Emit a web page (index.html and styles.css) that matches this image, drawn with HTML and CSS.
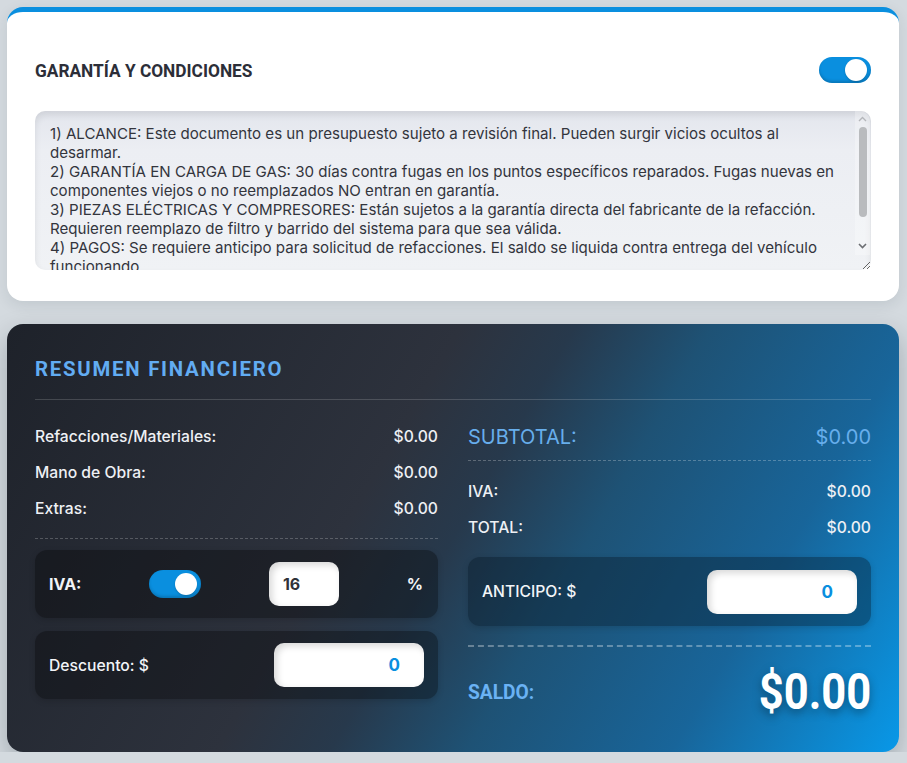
FILE: index.html
```html
<!DOCTYPE html>
<html lang="es">
<head>
<meta charset="utf-8">
<title>Presupuesto</title>
<link rel="stylesheet" href="styles.css">
</head>
<body>
<div class="page">
  <section class="card terms">
    <div class="terms-head">
      <h2 class="terms-title"><span class="narrow">GARANTÍA Y CONDICIONES</span></h2>
      <span class="switch switch-lg"><span class="knob"></span></span>
    </div>
    <div class="terms-box">
      <textarea class="terms-text">1) ALCANCE: Este documento es un presupuesto sujeto a revisión final. Pueden surgir vicios ocultos al desarmar.
2) GARANTÍA EN CARGA DE GAS: 30 días contra fugas en los puntos específicos reparados. Fugas nuevas en componentes viejos o no reemplazados NO entran en garantía.
3) PIEZAS ELÉCTRICAS Y COMPRESORES: Están sujetos a la garantía directa del fabricante de la refacción. Requieren reemplazo de filtro y barrido del sistema para que sea válida.
4) PAGOS: Se requiere anticipo para solicitud de refacciones. El saldo se liquida contra entrega del vehículo funcionando.</textarea>
      <div class="scrollbar" aria-hidden="true">
        <svg class="sb-arrow" width="9" height="6" viewBox="0 0 9 6"><path d="M1 5 L4.5 1.5 L8 5" fill="none" stroke="#b4b6ba" stroke-width="1.4"/></svg>
        <span class="sb-thumb"></span>
        <svg class="sb-arrow sb-down" width="9" height="6" viewBox="0 0 9 6"><path d="M1 1 L4.5 4.5 L8 1" fill="none" stroke="#6c6e73" stroke-width="1.6"/></svg>
      </div>
    </div>
  </section>

  <section class="card summary">
    <h2 class="summary-title"><span class="narrow">RESUMEN FINANCIERO</span></h2>
    <div class="summary-grid">
      <div class="col">
        <div class="lines lines-left">
          <div class="row"><span>Refacciones/Materiales:</span><span>$0.00</span></div>
          <div class="row"><span>Mano de Obra:</span><span>$0.00</span></div>
          <div class="row"><span>Extras:</span><span>$0.00</span></div>
        </div>
        <div class="box box-iva">
          <span class="box-label strong">IVA:</span>
          <span class="switch"><span class="knob"></span></span>
          <input class="field field-pct" type="text" value="16">
          <span class="box-label strong">%</span>
        </div>
        <div class="box">
          <span class="box-label">Descuento: $</span>
          <input class="field field-money" type="text" value="0">
        </div>
      </div>
      <div class="col">
        <div class="row subtotal"><span>SUBTOTAL:</span><span>$0.00</span></div>
        <div class="row row-first"><span>IVA:</span><span>$0.00</span></div>
        <div class="row"><span>TOTAL:</span><span>$0.00</span></div>
        <div class="box box-anticipo">
          <span class="box-label">ANTICIPO: $</span>
          <input class="field field-money" type="text" value="0">
        </div>
        <div class="saldo">
          <span class="saldo-label"><span class="narrow">SALDO:</span></span>
          <span class="saldo-value"><span class="narrow narrow-right">$0.00</span></span>
        </div>
      </div>
    </div>
  </section>
</div>
</body>
</html>
```

FILE: styles.css
```css
* { box-sizing: border-box; }

html, body {
  margin: 0;
  padding: 0;
  background: #d4dadf;
  font-family: Inter, "Noto Sans", "Liberation Sans", sans-serif;
}

.page {
  padding: 7px 8px 0 7px;
  display: flex;
  flex-direction: column;
  gap: 23px;
}

.card {
  border-radius: 16px;
}

.narrow {
  display: inline-block;
  white-space: nowrap;
  transform-origin: left center;
}

.narrow-right { transform-origin: right center; }

.terms {
  background: #ffffff;
  border-top: 5px solid #0a8fdf;
  padding: 45px 28px 31px;
  box-shadow: 0 4px 14px rgba(30, 45, 60, 0.10);
}

.terms-head {
  display: flex;
  align-items: center;
  justify-content: space-between;
  height: 26px;
  margin-bottom: 28px;
}

.terms-title {
  margin: 0;
  font-family: Roboto, "Liberation Sans", sans-serif;
  font-weight: 700;
  font-size: 19px;
  color: #2c2e38;
}

.terms-title .narrow { transform: scaleX(0.91); }

.switch {
  position: relative;
  display: inline-block;
  width: 52px;
  height: 28px;
  border-radius: 14px;
  background: #0a8fdf;
  box-shadow: inset 0 -2px 3px rgba(0, 0, 0, 0.18);
  flex: none;
}

.switch-lg { height: 26px; border-radius: 13px; }

.knob {
  position: absolute;
  top: 3px;
  right: 4px;
  width: 22px;
  height: 22px;
  border-radius: 50%;
  background: #ffffff;
  box-shadow: 0 1px 2px rgba(0, 0, 0, 0.2);
}

.switch-lg .knob { top: 2px; }

.terms-box {
  position: relative;
}

.terms-text {
  display: block;
  width: 100%;
  height: 159px;
  border: none;
  border-radius: 10px;
  padding: 13px 30px 13px 15px;
  background: linear-gradient(180deg, #e3e6ed 0%, #eceef3 25%, #f0f2f5 100%);
  box-shadow: inset 0 4px 7px rgba(0, 0, 0, 0.09);
  font-family: Inter, "Noto Sans", "Liberation Sans", sans-serif;
  font-size: 15.1px;
  line-height: 19px;
  color: #33353d;
  outline: none;
}

.scrollbar {
  position: absolute;
  top: 0;
  right: 1px;
  width: 15px;
  height: 144px;
  display: flex;
  flex-direction: column;
  align-items: center;
  background: rgba(255, 255, 255, 0.28);
  border-top-right-radius: 10px;
  pointer-events: none;
}

.sb-arrow {
  display: block;
  margin-top: 5px;
  flex: none;
}

.sb-thumb {
  display: block;
  width: 8px;
  height: 90px;
  margin-top: 5px;
  border-radius: 4px;
  background: #b9bbbe;
}

.sb-down {
  margin-top: auto;
  margin-bottom: 6px;
}

.summary {
  background: linear-gradient(120deg, #1e222a 0%, #2d323d 40%, #27394c 50%, #1e5275 62%, #18659a 80%, #0898e8 100%);
  padding: 29px 28px 30px;
  box-shadow: 0 10px 24px rgba(20, 30, 45, 0.25);
  color: #eceef2;
}

.summary-title {
  margin: 0;
  height: 47px;
  line-height: 32px;
  border-bottom: 1px solid rgba(255, 255, 255, 0.16);
  font-family: Roboto, "Liberation Sans", sans-serif;
  font-weight: 700;
  font-size: 21px;
  letter-spacing: 1.8px;
  color: #62acf2;
}

.summary-title .narrow { transform: scaleX(0.97); }

.summary-grid {
  display: grid;
  grid-template-columns: 1fr 1fr;
  column-gap: 30px;
  padding-top: 18px;
}

.col {
  display: flex;
  flex-direction: column;
}

.row {
  display: flex;
  justify-content: space-between;
  align-items: center;
  height: 36px;
  font-size: 15.7px;
  font-weight: 500;
  color: #eef0f4;
}

.lines-left {
  padding-bottom: 12px;
  border-bottom: 1px dashed rgba(255, 255, 255, 0.22);
  margin-bottom: 11px;
}

.subtotal {
  font-size: 20px;
  font-weight: 400;
  color: #67aeec;
  height: 43px;
  padding-bottom: 4px;
  border-bottom: 1px dashed rgba(255, 255, 255, 0.25);
}

.row-first { margin-top: 12px; }

.box {
  display: flex;
  align-items: center;
  justify-content: space-between;
  height: 68px;
  padding: 0 14px;
  border-radius: 12px;
  background: rgba(0, 0, 0, 0.32);
  box-shadow: 0 2px 6px rgba(0, 0, 0, 0.15);
}

.box + .box { margin-top: 13px; }

.box-iva { padding-right: 15px; }

.box-anticipo {
  height: 69px;
  margin-top: 12px;
  background: rgba(5, 20, 35, 0.38);
}

.box-label {
  font-size: 15.7px;
  font-weight: 500;
  color: #f2f4f7;
}

.box-label.strong { font-size: 16px; font-weight: 700; }

.field {
  height: 44px;
  border: none;
  border-radius: 10px;
  background: #ffffff;
  box-shadow: inset 3px 3px 7px rgba(0, 0, 0, 0.16);
  font-family: Inter, "Noto Sans", "Liberation Sans", sans-serif;
  outline: none;
}

.field-pct {
  width: 70px;
  padding: 0 14px;
  font-size: 16px;
  font-weight: 700;
  color: #2f3138;
}

.field-money {
  width: 150px;
  padding: 0 24px 0 10px;
  text-align: right;
  font-size: 17px;
  font-weight: 700;
  color: #0a8fdf;
}

.saldo {
  display: flex;
  justify-content: space-between;
  align-items: center;
  margin-top: 19px;
  padding-top: 15px;
  border-top: 2px dashed rgba(255, 255, 255, 0.32);
  height: 77px;
}

.saldo-label {
  font-family: Roboto, "Liberation Sans", sans-serif;
  font-weight: 700;
  font-size: 20px;
  color: #6ab2f4;
}

.saldo-label .narrow { transform: scaleX(0.96); }

.saldo-value {
  font-family: Roboto, "Liberation Sans", sans-serif;
  font-weight: 700;
  font-size: 50px;
  line-height: 60px;
  color: #ffffff;
  text-shadow: 0 4px 10px rgba(0, 0, 0, 0.35);
}

.saldo-value .narrow { transform: scaleX(0.87); }
```
